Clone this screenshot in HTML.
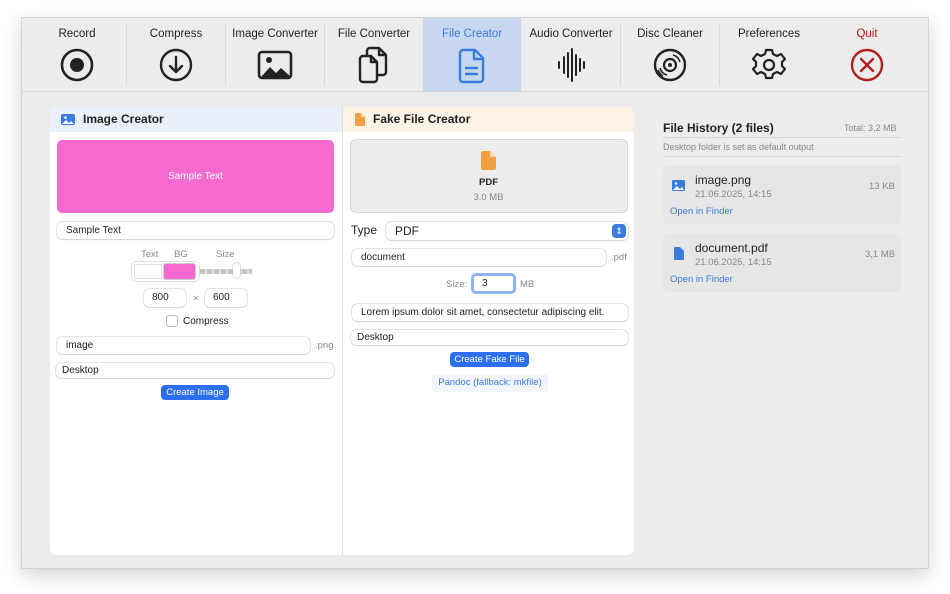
<!DOCTYPE html>
<html><head><meta charset="utf-8"><style>
*{box-sizing:border-box;margin:0;padding:0}
body{width:950px;height:594px;background:#fff;font-family:"Liberation Sans",sans-serif;position:relative;overflow:hidden;color:#222}
.win{position:absolute;left:21px;top:17px;width:908px;height:552px;background:#ececec;border:1px solid #d4d4d4;box-shadow:0 6px 18px rgba(0,0,0,.18)}
.tb{position:absolute;left:0;top:0;width:906px;height:74px;background:#ececec;border-bottom:1px solid #d6d6d6}
.tab{position:absolute;top:0;height:73px;width:98px;text-align:center;font-size:11.5px;color:#222}
.tab .l{position:absolute;top:10px;left:0;right:0}
.tab svg{position:absolute;left:31px;top:29px}
.sep{position:absolute;top:6px;height:62px;width:1px;background:#dadada}
.a{position:absolute}
.panel{position:absolute;top:89px;height:448px;background:#fff;border-radius:7px}
.field{position:absolute;background:#fff;border-radius:5px;box-shadow:0 0 0 .5px #c8c8c8,0 1px 1px rgba(0,0,0,.12);font-size:10px;padding-left:9px;padding-top:2px;line-height:14px;height:17px;color:#222}
.btn{position:absolute;background:#2c6ff0;color:#fff;border-radius:4px;font-size:9.5px;text-align:center;line-height:15px;height:15px;white-space:nowrap}
.g{color:#888;font-size:9.5px}
</style></head><body>
<div class="win">
<div class="tb">
 <div class="tab" style="left:6px"><div class="l">Record</div><svg width="36" height="36" viewBox="0 0 36 36"><circle cx="18" cy="18" r="15" fill="none" stroke="#222" stroke-width="2.6"/><circle cx="18" cy="18" r="7" fill="#222"/></svg></div>
 <div class="sep" style="left:104px"></div>
 <div class="tab" style="left:105px"><div class="l">Compress</div><svg width="36" height="36" viewBox="0 0 36 36"><circle cx="18" cy="18" r="15" fill="none" stroke="#222" stroke-width="2.4"/><path d="M18 10v15M12 19l6 6 6-6" fill="none" stroke="#222" stroke-width="2.4" stroke-linecap="round" stroke-linejoin="round"/></svg></div>
 <div class="sep" style="left:203px"></div>
 <div class="tab" style="left:204px"><div class="l">Image Converter</div><svg width="36" height="36" viewBox="0 0 36 36"><rect x="2" y="5" width="32" height="26" rx="3" fill="none" stroke="#222" stroke-width="2.6"/><path d="M4 30l9-10 6 6 5-5 10 9z" fill="#222"/><circle cx="12" cy="13" r="3" fill="#222"/></svg></div>
 <div class="sep" style="left:302px"></div>
 <div class="tab" style="left:303px"><div class="l">File Converter</div><svg width="36" height="40" viewBox="0 0 36 40" style="top:27px"><path d="M14 3h9l7 7v17a3 3 0 0 1-3 3H14a3 3 0 0 1-3-3V6a3 3 0 0 1 3-3zM23 3v7h7" fill="none" stroke="#222" stroke-width="2.4" stroke-linejoin="round"/><path d="M7 11h8l6 6v17a3 3 0 0 1-3 3H7a3 3 0 0 1-3-3V14a3 3 0 0 1 3-3zM15 11v6h6" fill="#ececec" stroke="#222" stroke-width="2.4" stroke-linejoin="round"/></svg></div>
 <div class="tab" style="left:401px;background:#c7d7ef;color:#3a7be0"><div class="l">File Creator</div><svg width="36" height="38" viewBox="0 0 36 38"><path d="M9 3h12l8 8v21a3 3 0 0 1-3 3H9a3 3 0 0 1-3-3V6a3 3 0 0 1 3-3zM20 3v9h9M11 21h13M11 27h13" fill="none" stroke="#3a7be0" stroke-width="2.4" stroke-linejoin="round"/></svg></div>
 <div class="tab" style="left:500px"><div class="l">Audio Converter</div><svg width="36" height="36" viewBox="0 0 36 36"><path d="M6 15v6M11 10v16M15 6v24M19 2v32M23 8v20M27 12v12M31 15v6" stroke="#222" stroke-width="2" stroke-linecap="round"/></svg></div>
 <div class="sep" style="left:598px"></div>
 <div class="tab" style="left:599px"><div class="l">Disc Cleaner</div><svg width="36" height="36" viewBox="0 0 36 36"><circle cx="18" cy="18" r="15" fill="none" stroke="#222" stroke-width="2.4"/><circle cx="18" cy="18" r="6" fill="none" stroke="#222" stroke-width="2.2"/><circle cx="18" cy="18" r="2" fill="#222"/><path d="M8 21a10 10 0 0 0 7 7M6 23a13 13 0 0 0 5 6M28 15a10 10 0 0 0-7-7" fill="none" stroke="#222" stroke-width="1.6"/></svg></div>
 <div class="sep" style="left:697px"></div>
 <div class="tab" style="left:698px"><div class="l">Preferences</div><svg width="36" height="36" viewBox="0 0 36 36"><path d="M15 3h6l1 4 4 2 4-2 4 5-3 3v4l3 3-4 5-4-2-4 2-1 4h-6l-1-4-4-2-4 2-4-5 3-3v-4l-3-3 4-5 4 2 4-2z" fill="none" stroke="#222" stroke-width="2.2" stroke-linejoin="round"/><circle cx="18" cy="18" r="5" fill="none" stroke="#222" stroke-width="2.2"/></svg></div>
 <div class="tab" style="left:796px;color:#b0201c"><div class="l">Quit</div><svg width="36" height="36" viewBox="0 0 36 36"><circle cx="18" cy="18" r="15" fill="none" stroke="#b0201c" stroke-width="2.4"/><path d="M12 12l12 12M24 12L12 24" stroke="#b0201c" stroke-width="2.4" stroke-linecap="round"/></svg></div>
</div>

<div class="panel" style="left:28px;width:292px;border-radius:7px 0 0 7px">
 <div class="a" style="left:0;top:0;width:292px;height:25px;background:#e9f0fc;border-radius:7px 0 0 0"></div>
 <svg class="a" style="left:11px;top:7px" width="14" height="11" viewBox="0 0 14 11"><rect width="14" height="11" rx="2" fill="#3a7be0"/><path d="M1 10l4-4 3 3 2-2 3 3z" fill="#fff"/><circle cx="4.5" cy="3.5" r="1.3" fill="#fff"/></svg>
 <div class="a" style="left:33px;top:5px;font-size:12px;font-weight:bold">Image Creator</div>
 <div class="a" style="left:7px;top:33px;width:277px;height:73px;background:#f66ad0;border-radius:5px;color:#fff;font-size:10px;text-align:center;line-height:73px">Sample Text</div>
 <div class="field" style="left:7px;top:115px;width:277px">Sample Text</div>
 <div class="a g" style="left:91px;top:142px">Text</div>
 <div class="a g" style="left:124px;top:142px">BG</div>
 <div class="a g" style="left:166px;top:142px">Size</div>
 <div class="a" style="left:82px;top:155px;width:67px;height:19px;border-radius:4px;box-shadow:0 0 0 .5px #bbb"></div>
 <div class="a" style="left:84px;top:157px;width:28px;height:15px;background:#fff;border:1px solid #ddd"></div>
 <div class="a" style="left:113px;top:156px;width:33px;height:17px;background:#f66ad0;border-radius:3px;border:1px solid #ccc"></div>
 <div class="a" style="left:150px;top:162px;width:52px;height:5px;background:repeating-linear-gradient(90deg,#c4c4c4 0 5px,#e0e0e0 5px 7px)"></div>
 <div class="a" style="left:183px;top:156px;width:7px;height:15px;background:#fff;border-radius:3px;box-shadow:0 0 0 .5px #bbb"></div>
 <div class="field" style="left:94px;top:182px;width:42px;height:18px;padding-left:8px">800</div>
 <div class="a g" style="left:143px;top:186px">×</div>
 <div class="field" style="left:155px;top:182px;width:42px;height:18px;padding-left:8px">600</div>
 <div class="a" style="left:116px;top:208px;width:12px;height:12px;border:1px solid #bbb;border-radius:3px;background:#fff"></div>
 <div class="a" style="left:133px;top:209px;font-size:10px">Compress</div>
 <div class="field" style="left:7px;top:230px;width:253px">image</div>
 <div class="a g" style="left:265px;top:233px">.png</div>
 <div class="field" style="left:6px;top:256px;width:278px;height:15px;padding-top:1px;line-height:13px;padding-left:6px">Desktop</div>
 <div class="btn" style="left:111px;top:278px;width:68px">Create Image</div>
</div>
<div class="a" style="left:320px;top:89px;width:1px;height:448px;background:#ddd"></div>

<div class="panel" style="left:321px;width:291px;border-radius:0 7px 7px 0">
 <div class="a" style="left:0;top:0;width:291px;height:25px;background:#fdf3e5;border-radius:0 7px 0 0"></div>
 <svg class="a" style="left:12px;top:6px" width="10" height="13" viewBox="0 0 10 13"><path d="M0 1a1 1 0 0 1 1-1h5l4 4v8a1 1 0 0 1-1 1H1a1 1 0 0 1-1-1z" fill="#f0a040"/><path d="M6 0v4h4" fill="#fbd9a8"/></svg>
 <div class="a" style="left:30px;top:5px;font-size:12px;font-weight:bold">Fake File Creator</div>
 <div class="a" style="left:7px;top:32px;width:278px;height:74px;background:#ececec;border:1px solid #d6d6d6;border-radius:6px"></div>
 <svg class="a" style="left:138px;top:44px" width="15" height="19" viewBox="0 0 15 19"><path d="M0 2a2 2 0 0 1 2-2h7l6 6v11a2 2 0 0 1-2 2H2a2 2 0 0 1-2-2z" fill="#f0a040"/><path d="M9 0v6h6" fill="#fbd9a8"/></svg>
 <div class="a" style="left:0;top:70px;width:291px;text-align:center;font-size:9.5px;font-weight:bold">PDF</div>
 <div class="a g" style="left:0;top:85px;width:291px;text-align:center">3.0 MB</div>
 <div class="a" style="left:8px;top:116px;font-size:12px">Type</div>
 <div class="field" style="left:43px;top:115px;width:242px;height:18px;line-height:14px;font-size:12px">PDF</div>
 <div class="a" style="left:269px;top:117px;width:14px;height:14px;background:#3a7be0;border-radius:4px;color:#fff;font-size:9px;text-align:center;line-height:14px">⇕</div>
 <div class="field" style="left:9px;top:142px;width:254px">document</div>
 <div class="a g" style="left:268px;top:145px">.pdf</div>
 <div class="a g" style="left:103px;top:172px">Size:</div>
 <div class="a" style="left:128px;top:166px;width:45px;height:21px;border:3px solid #8fb3ef;border-radius:5px;background:#fff;font-size:10px;padding-left:8px;line-height:15px">3</div>
 <div class="a g" style="left:177px;top:172px">MB</div>
 <div class="field" style="left:9px;top:197px;width:276px">Lorem ipsum dolor sit amet, consectetur adipiscing elit.</div>
 <div class="field" style="left:8px;top:223px;width:277px;height:15px;padding-top:1px;line-height:13px;padding-left:6px">Desktop</div>
 <div class="btn" style="left:107px;top:245px;width:79px">Create Fake File</div>
 <div class="a" style="left:89px;top:267px;width:116px;height:18px;background:#f2f5fc;border-radius:4px;color:#3a7be0;font-size:9.5px;text-align:center;line-height:18px">Pandoc (fallback: mkfile)</div>
</div>

<div class="a" style="left:641px;top:103px;font-size:12px;font-weight:bold">File History (2 files)</div>
<div class="a g" style="left:822px;top:105px;font-size:9px">Total: 3,2 MB</div>
<div class="a" style="left:641px;top:119px;width:238px;height:1px;background:#d6d6d6"></div>
<div class="a g" style="left:641px;top:124px;font-size:9px">Desktop folder is set as default output</div>
<div class="a" style="left:641px;top:138px;width:238px;height:1px;background:#d6d6d6"></div>
<div class="a" style="left:641px;top:147px;width:238px;height:59px;background:#e6e6e6;border-radius:6px"></div>
<svg class="a" style="left:650px;top:162px" width="13" height="11" viewBox="0 0 13 11"><rect width="13" height="11" rx="1.5" fill="#3a7be0"/><path d="M1 10l4-4 3 3 2-2 2 3z" fill="#fff"/><circle cx="4" cy="3.5" r="1.2" fill="#fff"/></svg>
<div class="a" style="left:673px;top:155px;font-size:12px">image.png</div>
<div class="a g" style="left:673px;top:171px;font-size:9.5px">21.06.2025, 14:15</div>
<div class="a g" style="left:847px;top:163px;font-size:9.5px">13 KB</div>
<div class="a" style="left:648px;top:188px;font-size:9.5px;color:#3a7be0">Open in Finder</div>
<div class="a" style="left:641px;top:215px;width:238px;height:59px;background:#e6e6e6;border-radius:6px"></div>
<svg class="a" style="left:652px;top:229px" width="10" height="13" viewBox="0 0 10 13"><path d="M0 1a1 1 0 0 1 1-1h5l4 4v8a1 1 0 0 1-1 1H1a1 1 0 0 1-1-1z" fill="#3a7be0"/></svg>
<div class="a" style="left:673px;top:223px;font-size:12px">document.pdf</div>
<div class="a g" style="left:673px;top:239px;font-size:9.5px">21.06.2025, 14:15</div>
<div class="a g" style="left:843px;top:231px;font-size:9.5px">3,1 MB</div>
<div class="a" style="left:648px;top:256px;font-size:9.5px;color:#3a7be0">Open in Finder</div>
</div>
</body></html>
